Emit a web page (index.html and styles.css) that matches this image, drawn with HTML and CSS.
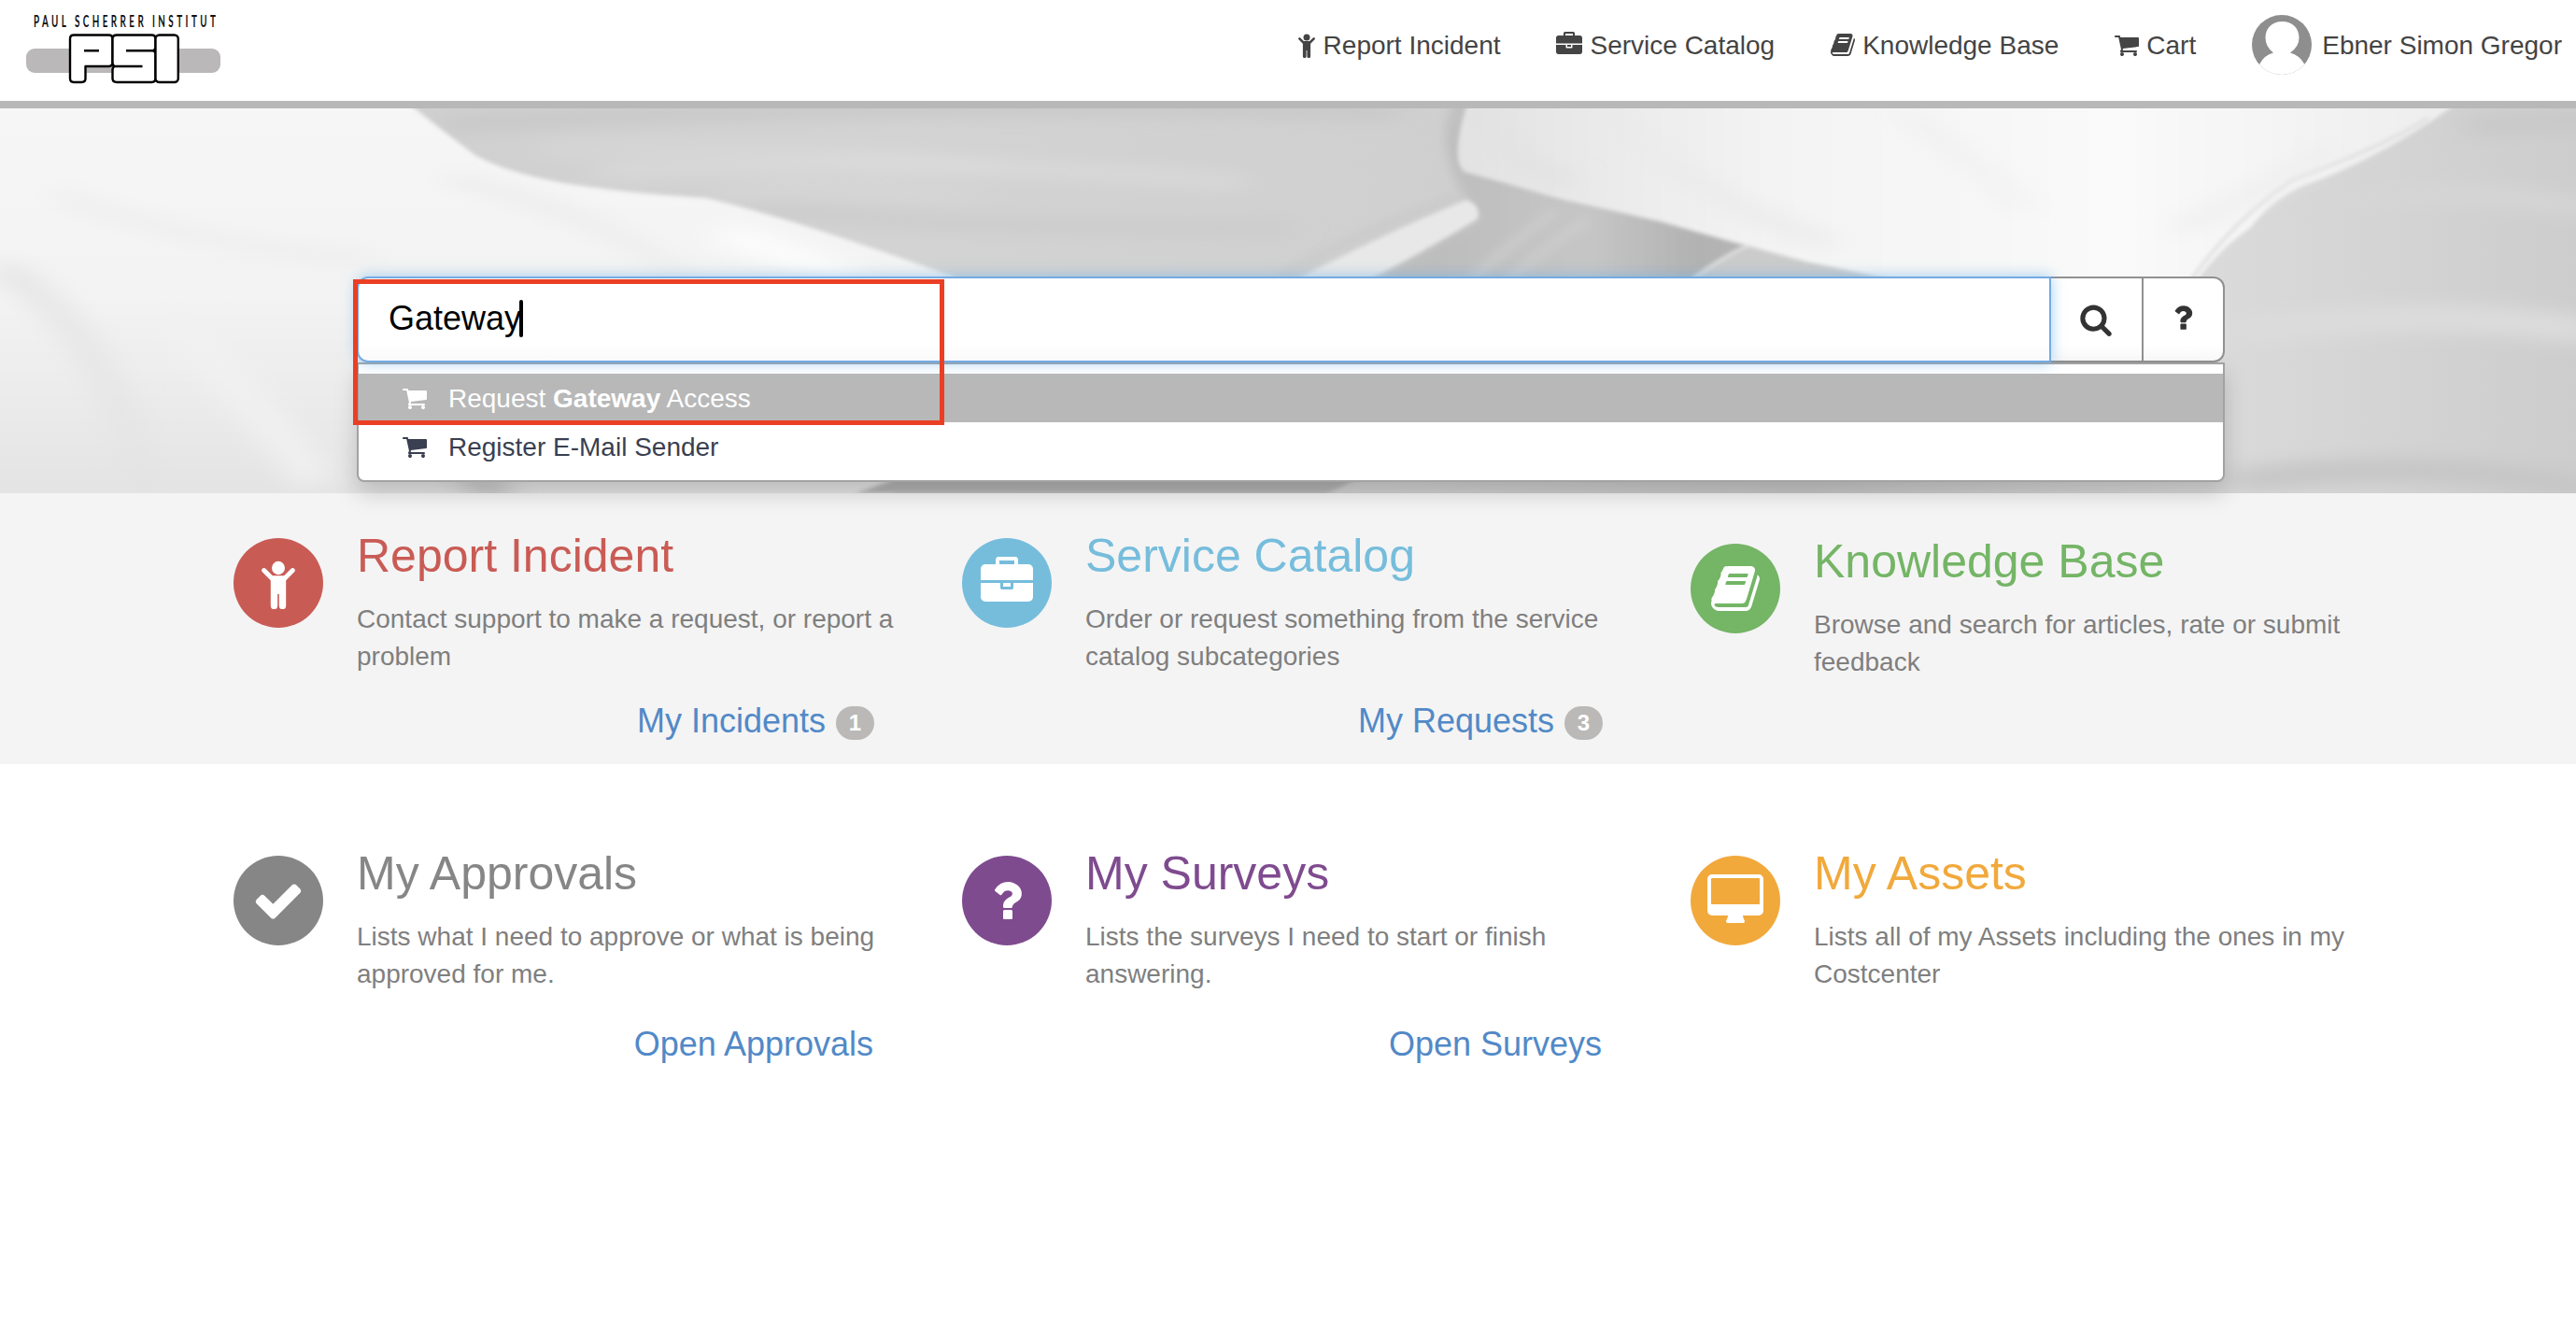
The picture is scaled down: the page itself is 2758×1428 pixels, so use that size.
FILE: index.html
```html
<!DOCTYPE html>
<html lang="en">
<head>
<meta charset="utf-8">
<title>Service Portal</title>
<link rel="stylesheet" href="styles.css">
</head>
<body>
<svg class="sprite" aria-hidden="true">
  <symbol id="child" viewBox="0 0 40 56">
    <ellipse cx="20" cy="12" rx="7" ry="7.2"/>
    <path d="M4.600 14.600L13.500 23.500M35.400 14.600L26.500 23.500" fill="none" stroke="currentColor" stroke-width="5" stroke-linecap="round"/>
    <path d="M11.800 20.200H28.200V52.500a3.700 3.700 0 0 1-7.400 0V40H19.200V52.500a3.700 3.700 0 0 1-7.400 0z"/>
  </symbol>
  <symbol id="briefcase" viewBox="0 0 1792 1792"><path d="M640 256h512v-128h-512v128zm1152 640v480q0 66-47 113t-113 47h-1472q-66 0-113-47t-47-113v-480h672v160q0 26 19 45t45 19h320q26 0 45-19t19-45v-160h672zm-768 0v128h-256v-128h256zm768-480v384h-1792v-384q0-66 47-113t113-47h352v-160q0-40 28-68t68-28h576q40 0 68 28t28 68v160h352q66 0 113 47t47 113z"/></symbol>
  <symbol id="book" viewBox="64 0 1664 1792"><path d="M1703 478q40 57 18 129l-275 906q-19 64-76.5 107.5t-122.5 43.5h-923q-77 0-148.5-53.5t-99.5-131.5q-24-67-2-127 0-4 3-27t4-37q1-8-3-21.5t-3-19.5q2-11 8-21t16.5-23.5 16.5-23.5q23-38 45-91.5t30-91.5q3-10 .5-30t-.5-28q3-11 17-28t17-23q21-36 42-92t25-90q1-9-2.5-32t.5-28q4-13 22-30.5t22-22.5q19-26 42.5-84.5t27.5-96.5q1-8-3-25.5t-2-26.5q2-8 9-18t18-23 17-21q8-12 16.5-30.5t15-35 16-36 19.5-32 26.5-23.5 36-11.5 47.5 5.5l-1 3q38-9 51-9h761q74 0 114 56t18 130l-274 906q-36 119-71.5 153.5t-128.5 34.5h-869q-27 0-38 15-11 16-1 43 24 70 144 70h923q29 0 56-15.5t35-41.5l300-987q7-22 5-57 38 15 59 43zm-1064 2q-4 13 2 22.5t20 9.5h608q13 0 25.5-9.5t16.5-22.5l21-64q4-13-2-22.5t-20-9.5h-608q-13 0-25.5 9.5t-16.5 22.5zm-83 256q-4 13 2 22.5t20 9.5h608q13 0 25.5-9.5t16.5-22.5l21-64q4-13-2-22.5t-20-9.5h-608q-13 0-25.5 9.5t-16.5 22.5z"/></symbol>
  <symbol id="cart" viewBox="64 0 1664 1792"><path d="M704 1536q0 52-38 90t-90 38-90-38-38-90 38-90 90-38 90 38 38 90zm896 0q0 52-38 90t-90 38-90-38-38-90 38-90 90-38 90 38 38 90zm128-1088v512q0 24-16.5 42.5t-40.5 21.5l-1044 122q13 60 13 70 0 16-24 64h920q26 0 45 19t19 45-19 45-45 19h-1024q-26 0-45-19t-19-45q0-11 8-31.5t16-36 21.5-40 15.5-29.5l-177-823h-204q-26 0-45-19t-19-45 19-45 45-19h256q16 0 28.5 6.5t19.5 15.5 13 24.5 8 26 5.5 29.5 4.5 26h1201q26 0 45 19t19 45z"/></symbol>
  <symbol id="search" viewBox="0 0 1792 1792"><path d="M1216 832q0-185-131.5-316.5t-316.5-131.5-316.5 131.5-131.5 316.5 131.5 316.5 316.5 131.5 316.5-131.5 131.5-316.5zm512 832q0 52-38 90t-90 38q-54 0-90-38l-343-342q-179 124-399 124-143 0-273.5-55.5t-225-150-150-225-55.5-273.5 55.5-273.5 150-225 225-150 273.5-55.5 273.5 55.5 225 150 150 225 55.5 273.5q0 220-124 399l343 343q37 37 37 90z"/></symbol>
  <symbol id="question" viewBox="0 0 1792 1792"><path d="M1088 1256v240q0 16-12 28t-28 12h-240q-16 0-28-12t-12-28v-240q0-16 12-28t28-12h240q16 0 28 12t12 28zm316-600q0 54-15.5 101t-35 76.5-55 59.5-57.5 43.5-61 35.5q-41 23-68.5 65t-27.5 67q0 17-12 32.5t-28 15.5h-240q-15 0-25.5-18.5t-10.5-37.5v-45q0-83 65-156.5t143-108.5q59-27 84-56t25-76q0-42-46.5-74t-107.5-32q-65 0-108 29-35 25-107 115-13 16-31 16-12 0-25-8l-164-125q-13-10-15.5-25t5.5-28q160-266 464-266 80 0 161 31t146 83 106 127.500 41 158.500z"/></symbol>
  <symbol id="check" viewBox="0 0 1792 1792"><path d="M1671 566q0 40-28 68l-724 724-136 136q-28 28-68 28t-68-28l-136-136-362-362q-28-28-28-68t28-68l136-136q28-28 68-28t68 28l294 295 656-657q28-28 68-28t68 28l136 136q28 28 28 68z"/></symbol>
  <symbol id="desktop" viewBox="-64 0 1920 1792"><path d="M1728 992v-832q0-13-9.5-22.5t-22.5-9.5h-1600q-13 0-22.5 9.5t-9.5 22.5v832q0 13 9.5 22.5t22.5 9.5h1600q13 0 22.5-9.5t9.500-22.500zm128-832v1088q0 66-47 113t-113 47h-544q0 37 16 77.500t32 71 16 43.500q0 26-19 45t-45 19h-512q-26 0-45-19t-19-45q0-14 16-44t32-70 16-78h-544q-66 0-113-47t-47-113v-1088q0-66 47-113t113-47h1600q66 0 113 47t47 113z"/></symbol>
</svg>

<header class="header">
  <svg class="logo" viewBox="0 0 240 100" role="img" aria-label="Paul Scherrer Institut">
    <text class="logo-text" transform="translate(36 29) scale(.58 1)" textLength="336">PAUL SCHERRER INSTITUT</text>
    <rect x="28" y="52" width="208" height="26" rx="9" fill="#bab8b9"/>
    <g fill="#fff" stroke="#000" stroke-width="2.400" stroke-linejoin="round" stroke-linecap="butt">
      <path d="M79 37.500H116.500Q120.500 37.500 120.500 41.500V67Q120.500 71 116.500 71H91.500V84Q91.500 88 87.500 88H79Q75 88 75 84V41.500Q75 37.500 79 37.500z"/>
      <path d="M125 37.500H162.500Q166.500 37.500 166.500 41.500V84Q166.500 88 162.500 88H125Q120.500 88 120.500 84V75Q120.500 72 122.500 71Q120.500 70 120.500 67V41.500Q120.500 37.500 125 37.500z"/>
      <rect x="166.500" y="37.500" width="24.300" height="50.500" rx="4"/>
      <path d="M90 54.200H106M135 54.200H166M121 71H152.500"/>
      <path d="M163 54.200L166.500 51V57.500z" fill="#000" stroke-width="1"/>
    </g>
  </svg>
  <nav class="nav">
    <a class="nav-item"><svg class="icon icon-child"><use href="#child"/></svg><span>Report Incident</span></a>
    <a class="nav-item"><svg class="icon icon-briefcase"><use href="#briefcase"/></svg><span>Service Catalog</span></a>
    <a class="nav-item"><svg class="icon"><use href="#book"/></svg><span>Knowledge Base</span></a>
    <a class="nav-item"><svg class="icon"><use href="#cart"/></svg><span>Cart</span></a>
    <a class="nav-item user">
      <svg class="avatar" viewBox="0 0 64 64">
        <clipPath id="round"><circle cx="32" cy="32" r="32"/></clipPath>
        <g clip-path="url(#round)">
          <rect width="64" height="64" fill="#8e8e8e"/>
          <path d="M0 64L8 53Q13 43 23 40.500Q14.500 34 14.500 24.500C14.500 14 22 7 32.500 7S50.500 14 50.500 24.500Q50.500 34 41 40.500Q51 43 56.500 53L64 64z" fill="#fff"/>
        </g>
      </svg><span>Ebner Simon Gregor</span></a>
  </nav>
</header>

<section class="hero">
  <svg class="hero-art" viewBox="0 0 2758 412" preserveAspectRatio="none" aria-hidden="true">
    <defs>
      <linearGradient id="base" x1="0" y1="0" x2="1" y2="0">
        <stop offset=".15" stop-color="#d0d0d0"/><stop offset=".35" stop-color="#d3d3d3"/><stop offset=".55" stop-color="#d0d0d0"/><stop offset=".7" stop-color="#c6c6c6"/><stop offset=".86" stop-color="#dadada"/><stop offset="1" stop-color="#cdcdcd"/>
      </linearGradient>
      <linearGradient id="left" x1="0" y1="0" x2="0" y2="1">
        <stop offset="0" stop-color="#f6f6f6"/><stop offset=".5" stop-color="#f3f3f3"/><stop offset="1" stop-color="#e2e2e2"/>
      </linearGradient>
      <linearGradient id="right" x1="0" y1="0" x2="1" y2="0">
        <stop offset="0" stop-color="#e2e2e2"/><stop offset=".3" stop-color="#f3f3f3"/><stop offset=".65" stop-color="#fafafa"/><stop offset="1" stop-color="#ededed"/>
      </linearGradient>
      <linearGradient id="shade" gradientUnits="userSpaceOnUse" x1="1540" y1="0" x2="2000" y2="0">
        <stop offset="0" stop-color="#bdbdbd"/><stop offset=".35" stop-color="#c6c6c6"/><stop offset=".6" stop-color="#b2b2b2"/><stop offset="1" stop-color="#bcbcbc"/>
      </linearGradient>
      <filter id="b2"><feGaussianBlur stdDeviation="2"/></filter>
      <filter id="b6" x="-20%" y="-50%" width="140%" height="200%"><feGaussianBlur stdDeviation="6"/></filter>
      <filter id="b14" x="-20%" y="-50%" width="140%" height="200%"><feGaussianBlur stdDeviation="18 9"/></filter>
    </defs>
    <rect width="2758" height="412" fill="url(#base)"/>
    <g filter="url(#b14)" fill="none">
      <path d="M470 18Q900 -10 1500 4" stroke="#c6c6c6" stroke-width="14"/>
      <path d="M580 45Q800 36 1080 62" stroke="#dadada" stroke-width="9"/>
      <path d="M640 68Q1000 50 1330 80" stroke="#e0e0e0" stroke-width="8"/>
      <path d="M780 88Q900 82 1040 92" stroke="#dcdcdc" stroke-width="6"/>
      <path d="M800 106Q1000 130 1380 128" stroke="#cbcbcb" stroke-width="14"/>
      <path d="M2500 100Q2640 80 2780 110" stroke="#d6d6d6" stroke-width="20"/>
      <path d="M2640 20L2780 12" stroke="#c8c8c8" stroke-width="20"/>
      <path d="M2390 240Q2600 210 2780 240" stroke="#dcdcdc" stroke-width="30"/>
      <path d="M2390 400Q2600 370 2780 410" stroke="#c6c6c6" stroke-width="26"/>
    </g>
    <g filter="url(#b6)">
      <path d="M1562-20Q1542 20 1550 50Q1556 74 1565 90L1584 118Q1520 150 1462 190H1900L2100 190L1900 110L1640 50Q1580 40 1580-20z" fill="url(#shade)"/>
      <path d="M1700 120Q1650 150 1610 190M1665 110Q1610 150 1570 190" stroke="#cfcfcf" stroke-width="7" fill="none"/>
      <path d="M1560 95Q1480 122 1370 180" stroke="#c6c6c6" stroke-width="6" fill="none"/>
    </g>
    <g filter="url(#b2)">
      <path d="M-20-20H420Q455 10 510 51C560 78 640 88 756 96Q850 118 1020 180L1150 260Q1100 360 915 430H-20z" fill="url(#left)"/>
      <path d="M915 412Q1000 385 1060 340H1500Q1480 390 1420 412z" fill="#b2b2b2"/>
      <path d="M1570 98Q1480 135 1385 185H1462Q1530 150 1582 118Q1586 104 1570 98z" fill="#e8e8e8"/>
      <path d="M1872 146Q1835 164 1803 190H2060L1940 166z" fill="#cbcbcb"/>
      <path d="M1872 146Q1835 164 1803 190" stroke="#dedede" stroke-width="4" fill="none"/>
    </g>
    <g filter="url(#b2)">
      <path d="M1576-20Q1550 54 1568 68Q1620 82 1671 97L1777 121Q1850 142 1935 165Q2000 178 2070 195H2345Q2370 155 2410 127Q2430 100 2463 84Q2560 50 2650-20z" fill="url(#right)"/>
      <path d="M2600 10Q2550 42 2455 76Q2390 120 2345 185" stroke="#e0e0e0" stroke-width="4" fill="none"/>
    </g>
    <g filter="url(#b14)" fill="none">
      <path d="M1590 0Q1600 50 1680 80" stroke="#e0e0e0" stroke-width="14"/>
      <path d="M1720 0Q1800 90 1960 145" stroke="#e9e9e9" stroke-width="14"/>
      <path d="M2030 0Q2120 60 2170 110" stroke="#eeeeee" stroke-width="14"/>
      <path d="M2500 40Q2420 90 2330 130" stroke="#ededed" stroke-width="14"/>
      <path d="M60 90Q200 150 400 160" stroke="#eeeeee" stroke-width="16"/>
      <path d="M480 75Q640 110 730 180" stroke="#ebebeb" stroke-width="14"/>
      <path d="M770 135Q840 150 920 190" stroke="#fcfcfc" stroke-width="26"/>
      <path d="M0 170Q120 240 160 420" stroke="#e3e3e3" stroke-width="22"/>
      <path d="M180 220Q260 300 340 400" stroke="#f1f1f1" stroke-width="36"/>
      <path d="M500 398L540 412" stroke="#a8a8a8" stroke-width="14"/>
    </g>
  </svg>
  <div class="search">
    <div class="search-input"><span>Gateway</span><i class="caret"></i></div>
    <button class="btn btn-search"><svg><use href="#search"/></svg></button>
    <button class="btn btn-help"><svg><use href="#question"/></svg></button>
    <ul class="results">
      <li class="result active"><svg class="icon"><use href="#cart"/></svg><span>Request <b>Gateway</b> Access</span></li>
      <li class="result"><svg class="icon"><use href="#cart"/></svg><span>Register E-Mail Sender</span></li>
    </ul>
    <div class="highlight"></div>
  </div>
</section>

<main>
  <section class="cards cards-gray">
    <article class="card red">
      <div class="disc"><svg><use href="#child"/></svg></div>
      <div class="body"><h2>Report Incident</h2><p>Contact support to make a request, or report a problem</p>
      <a class="more">My Incidents<span class="badge">1</span></a></div>
    </article>
    <article class="card blue">
      <div class="disc"><svg><use href="#briefcase"/></svg></div>
      <div class="body"><h2>Service Catalog</h2><p>Order or request something from the service catalog subcategories</p>
      <a class="more">My Requests<span class="badge">3</span></a></div>
    </article>
    <article class="card green">
      <div class="disc"><svg><use href="#book"/></svg></div>
      <div class="body"><h2>Knowledge Base</h2><p>Browse and search for articles, rate or submit feedback</p></div>
    </article>
  </section>
  <section class="cards cards-white">
    <article class="card gray">
      <div class="disc"><svg><use href="#check"/></svg></div>
      <div class="body"><h2>My Approvals</h2><p>Lists what I need to approve or what is being approved for me.</p>
      <a class="more">Open Approvals</a></div>
    </article>
    <article class="card purple">
      <div class="disc"><svg><use href="#question"/></svg></div>
      <div class="body"><h2>My Surveys</h2><p>Lists the surveys I need to start or finish answering.</p>
      <a class="more">Open Surveys</a></div>
    </article>
    <article class="card orange">
      <div class="disc"><svg><use href="#desktop"/></svg></div>
      <div class="body"><h2>My Assets</h2><p>Lists all of my Assets including the ones in my Costcenter</p></div>
    </article>
  </section>
</main>
</body>
</html>
```
FILE: styles.css
```css
* { box-sizing: border-box; }
body {
  margin: 0;
  background: #fff;
  font: 28px/40px "Liberation Sans", Arial, sans-serif;
  color: #444;
}
svg { fill: currentColor; display: block; }
.sprite { position: absolute; width: 0; height: 0; }

/* header */
.header {
  height: 116px;
  border-bottom: 8px solid #b8b8b8;
  display: flex;
  justify-content: space-between;
  align-items: flex-start;
}
.logo { width: 240px; height: 100px; }
.logo-text { font: 700 17px Lato, sans-serif; fill: #111; }
.nav { display: flex; gap: 60px; padding-right: 15px; }
.nav-item { display: flex; padding-top: 28px; height: 80px; white-space: nowrap; }
.nav-item span { padding-top: 1px; }
.icon { width: 26px; height: 28px; margin: 6px 8px 0 0; flex: none; }
.icon-child { width: 20px; }
.icon-briefcase { width: 28px; }
.avatar { width: 64px; height: 64px; margin: -12px 11px 0 0; }

/* hero with search */
.hero { position: relative; height: 412px; padding: 180px 376px 0 382px; }
.hero-art { position: absolute; inset: 0; width: 100%; height: 100%; }
.search { position: relative; z-index: 1; display: flex; height: 92px; }
.search-input {
  flex: 1;
  position: relative;
  z-index: 1;
  display: flex;
  padding: 23px 0 0 32px;
  border: 2px solid #74aae3;
  border-radius: 12px 0 0 12px;
  background: linear-gradient(#fff 80%, #fafafa);
  box-shadow: 0 0 16px rgba(102, 175, 233, .6);
  color: #000;
  font-size: 36px;
}
.caret { width: 4px; height: 40px; margin-left: -2px; border-radius: 2px; background: #000; }
.btn {
  padding: 0;
  border: 2px solid #919191;
  border-left: 0;
  background: linear-gradient(#fff 80%, #fafafa);
  color: #333;
  display: flex;
  justify-content: center;
  align-items: center;
}
.btn svg { width: 36px; height: 36px; }
.btn-search { width: 99px; padding: 0 2px 1px 0; }
.btn-help { width: 87px; padding: 0 1px 4px 0; border-radius: 0 12px 12px 0; }
.results {
  position: absolute;
  top: 92px;
  left: 0;
  right: 0;
  margin: 0;
  padding: 10px 0;
  list-style: none;
  border: 2px solid #a2a2a2;
  border-radius: 0 0 8px 8px;
  background: #fff;
  box-shadow: 0 12px 24px rgba(0, 0, 0, .175);
}
.result { display: flex; height: 52px; padding: 6px 0 0 47px; color: #3a3f51; }
.result span { padding-top: 1px; }
.result .icon { margin-right: 23px; }
.result.active { background: #b8b8b8; color: #fff; }
.highlight {
  position: absolute;
  z-index: 2;
  left: -4px;
  top: 3px;
  width: 633px;
  height: 156px;
  border: 5px solid #ea3f25;
}

/* cards */
.cards { display: grid; grid-template-columns: 780px 780px 780px; padding-left: 250px; }
.cards-gray { height: 290px; padding-top: 48px; background: #f4f4f4; }
.cards-white { padding-top: 98px; }
.card { display: flex; gap: 36px; }
.green { padding-top: 6px; }
.disc {
  width: 96px;
  height: 96px;
  flex: none;
  border-radius: 50%;
  display: flex;
  align-items: center;
  justify-content: center;
  color: #fff;
}
.disc svg { width: 60px; height: 56px; }
.body { width: 600px; margin-top: -9px; }
h2 { margin: 0 0 20px; font-size: 50px; line-height: 56px; font-weight: 400; }
p { margin: 0; color: #7f7f7f; }
.more {
  width: 554px;
  margin-top: 29px;
  display: flex;
  justify-content: flex-end;
  align-items: center;
  gap: 11px;
  color: #5289c7;
  font-size: 36px;
}
.cards-white .more { margin-top: 35px; padding-right: 1px; }
.badge {
  width: 41px;
  height: 36px;
  margin-top: 4px;
  border-radius: 18px;
  background: #bab9b8;
  color: #fff;
  font: bold 24px/36px "Liberation Sans", Arial, sans-serif;
  text-align: center;
}
.red h2 { color: #c95b55; }
.red .disc { background: #c95b55; }
.blue h2 { color: #76bddc; }
.blue .disc { background: #76bddc; }
.green h2 { color: #74b566; }
.green .disc { background: #74b566; }
.gray h2 { color: #868686; }
.gray .disc { background: #868686; }
.purple h2 { color: #7f4b8f; }
.purple .disc { background: #7f4b8f; }
.orange h2 { color: #f1a93c; }
.orange .disc { background: #f1a93c; }
```
